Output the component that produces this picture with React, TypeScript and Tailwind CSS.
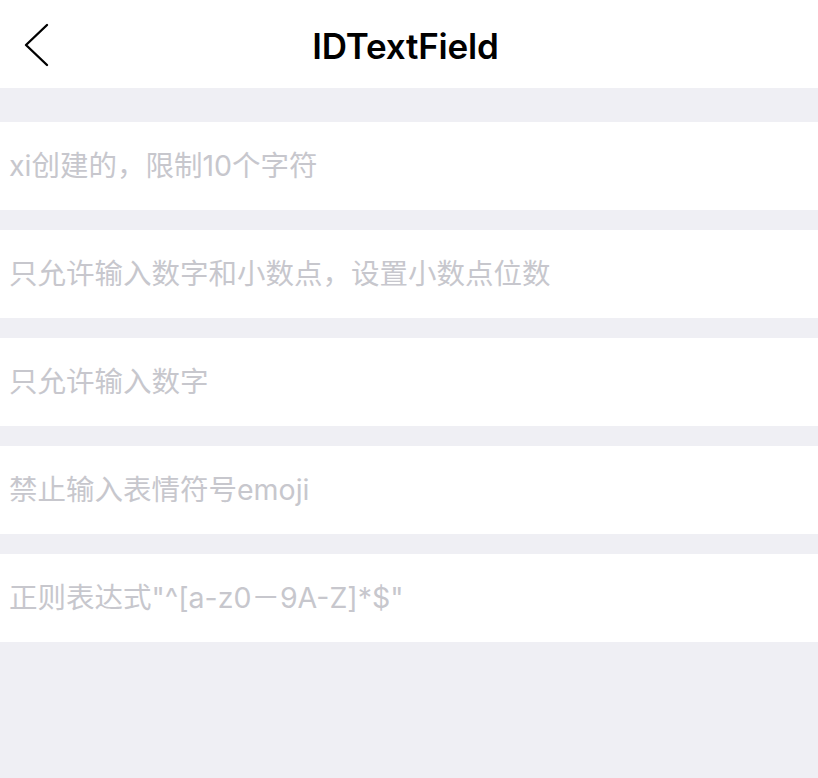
import { useState } from 'react';

const fields = [
  'xi创建的，限制10个字符',
  '只允许输入数字和小数点，设置小数点位数',
  '只允许输入数字',
  '禁止输入表情符号emoji',
  '正则表达式"^[a-z0－9A-Z]*$"',
];

export default function App() {
  const [values, setValues] = useState<string[]>(fields.map(() => ''));

  return (
    <div
      className="flex flex-col w-full h-[778px] bg-[#efeff4]"
      style={{ fontFamily: 'Inter, "Noto Sans CJK SC", sans-serif' }}
    >
      {/* nav bar */}
      <div className="relative flex items-center justify-center h-[88px] bg-white shrink-0">
        <button className="absolute left-[22px] top-[22px] w-[28px] h-[46px] flex items-center justify-center">
          <svg width="28" height="46" viewBox="0 0 28 46" fill="none">
            <path d="M25 3 L4 23 L25 43" stroke="#000" strokeWidth="2.4" strokeLinecap="round" strokeLinejoin="round" />
          </svg>
        </button>
        <h1 className="text-[35px] font-semibold text-black tracking-[-0.2px] ml-[-7px] mt-[4px]">IDTextField</h1>
      </div>

      <div className="h-[34px] shrink-0" />

      <div className="flex flex-col gap-[20px]">
        {fields.map((f, i) => (
          <div key={i} className="h-[88px] bg-white flex items-center">
            <input
              className="w-full h-full px-[9px] pb-[2px] text-[28.5px] text-black outline-none bg-transparent placeholder:text-[#c7c7cd]"
              placeholder={f}
              value={values[i]}
              onChange={e => {
                const next = [...values];
                next[i] = e.target.value;
                setValues(next);
              }}
            />
          </div>
        ))}
      </div>
    </div>
  );
}
